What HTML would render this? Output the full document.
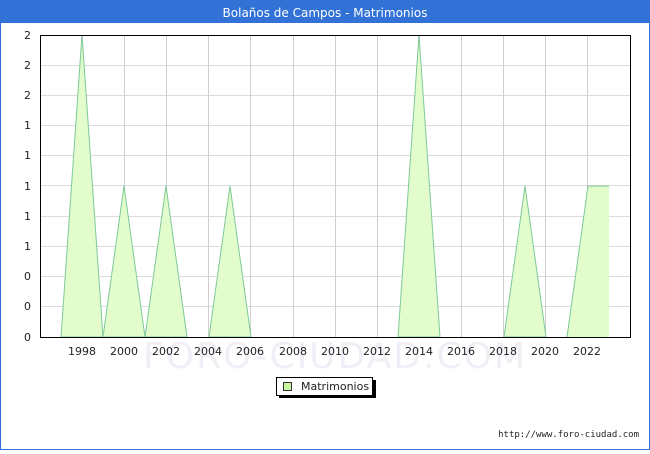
<!DOCTYPE html><html><head><style>body{margin:0;width:650px;height:450px;overflow:hidden;background:#fff;font-family:"DejaVu Sans","Liberation Sans",sans-serif}</style></head><body>
<svg width="650" height="450" xmlns="http://www.w3.org/2000/svg" font-family="DejaVu Sans, Liberation Sans, sans-serif">
<rect x="0" y="0" width="650" height="450" fill="#3272d6"/>
<rect x="1" y="23" width="648" height="426" fill="#fff"/>
<text x="325" y="17" fill="#fff" font-size="12" text-anchor="middle">Bolaños de Campos - Matrimonios</text>
<text x="335" y="368" fill="#eef0f6" font-size="36" text-anchor="middle" letter-spacing="2">FORO-CIUDAD.COM</text>
<g stroke="#dcdcdc" stroke-width="1">
<line x1="40" x2="630" y1="65.5" y2="65.5"/><line x1="40" x2="630" y1="95.5" y2="95.5"/><line x1="40" x2="630" y1="125.5" y2="125.5"/><line x1="40" x2="630" y1="155.5" y2="155.5"/><line x1="40" x2="630" y1="185.5" y2="185.5"/><line x1="40" x2="630" y1="216.5" y2="216.5"/><line x1="40" x2="630" y1="246.5" y2="246.5"/><line x1="40" x2="630" y1="276.5" y2="276.5"/><line x1="40" x2="630" y1="306.5" y2="306.5"/>
</g>
<g stroke="#cfcfcf">
<line x1="82.5" x2="82.5" y1="35" y2="337"/><line x1="124.5" x2="124.5" y1="35" y2="337"/><line x1="166.5" x2="166.5" y1="35" y2="337"/><line x1="208.5" x2="208.5" y1="35" y2="337"/><line x1="250.5" x2="250.5" y1="35" y2="337"/><line x1="293.5" x2="293.5" y1="35" y2="337"/><line x1="335.5" x2="335.5" y1="35" y2="337"/><line x1="377.5" x2="377.5" y1="35" y2="337"/><line x1="419.5" x2="419.5" y1="35" y2="337"/><line x1="461.5" x2="461.5" y1="35" y2="337"/><line x1="503.5" x2="503.5" y1="35" y2="337"/><line x1="545.5" x2="545.5" y1="35" y2="337"/><line x1="587.5" x2="587.5" y1="35" y2="337"/>
</g>
<g fill="#e2fccc" stroke="#7fc99a" stroke-width="1">
<polygon points="61,337 82,35 103,337"/>
<polygon points="103,337 124,186 145,337"/>
<polygon points="145,337 166,186 187,337"/>
<polygon points="209,337 230,186 251,337"/>
<polygon points="398,337 419,35 440,337"/>
<polygon points="504,337 525,186 546,337"/>
<polygon points="567,337 588,186 609,186 609,337" stroke="none"/>
<polyline points="567,337 588,186 609,186" fill="none"/>
</g>
<rect x="40.5" y="35.5" width="590" height="302" fill="none" stroke="#000"/>
<g font-size="11" fill="#222" text-anchor="end">
<text x="31" y="39">2</text><text x="31" y="69">2</text><text x="31" y="99">2</text><text x="31" y="129">1</text><text x="31" y="159">1</text><text x="31" y="190">1</text><text x="31" y="220">1</text><text x="31" y="250">1</text><text x="31" y="280">0</text><text x="31" y="310">0</text><text x="31" y="341">0</text>
</g>
<g font-size="11" fill="#222" text-anchor="middle">
<text x="82" y="355">1998</text><text x="124" y="355">2000</text><text x="166" y="355">2002</text><text x="208" y="355">2004</text><text x="250" y="355">2006</text><text x="293" y="355">2008</text><text x="335" y="355">2010</text><text x="377" y="355">2012</text><text x="419" y="355">2014</text><text x="461" y="355">2016</text><text x="503" y="355">2018</text><text x="545" y="355">2020</text><text x="587" y="355">2022</text>
</g>
<rect x="279" y="380" width="97" height="18" fill="#000"/>
<rect x="276.5" y="377.5" width="96" height="18" fill="#fff" stroke="#000"/>
<rect x="283.5" y="382.5" width="8" height="8" fill="#c8f5a0" stroke="#333"/>
<text x="301" y="390" font-size="11" fill="#222">Matrimonios</text>
<text x="639" y="437" font-size="9" fill="#222" text-anchor="end" font-family="DejaVu Sans Mono, Liberation Mono, monospace">http://www.foro-ciudad.com</text>
</svg></body></html>
